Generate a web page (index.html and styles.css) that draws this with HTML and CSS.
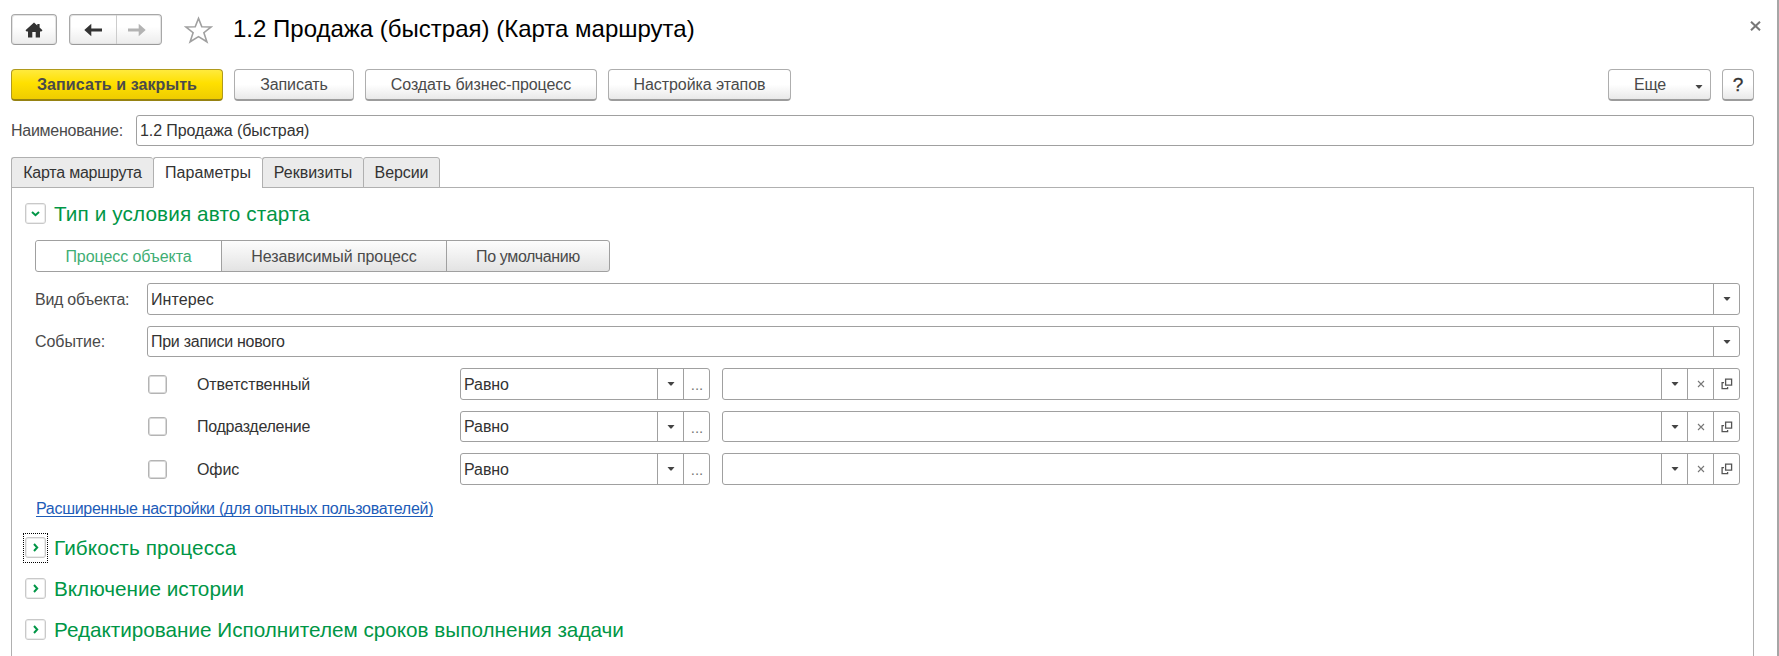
FILE: index.html
```html
<!DOCTYPE html>
<html lang="ru">
<head>
<meta charset="utf-8">
<title>1.2 Продажа (быстрая) (Карта маршрута)</title>
<link rel="stylesheet" href="styles.css">
</head>
<body>
<svg class="defs" aria-hidden="true">
  <symbol id="caret" viewBox="0 0 8 4"><path d="M0.5 0h7L4.6 3.6H3.4z" fill="#444"/></symbol>
  <symbol id="cross" viewBox="0 0 8 8"><path d="M1 1l6 6M7 1L1 7" stroke="#777" stroke-width="1.1"/></symbol>
  <symbol id="open" viewBox="0 0 12 12"><path d="M4.6 1.1h6v6h-6zM3 4.6H1.1v6h5.5V9" fill="none" stroke="#555" stroke-width="1.3"/></symbol>
</svg>
<main class="window">
  <header class="titlebar">
    <button class="nav home"><svg width="18" height="16" viewBox="0 0 18 16"><path d="M9 0.5L0.5 8.2 1.6 9.5H3V15.5H7.3V10H10.7V15.5H15V9.5H16.4L17.5 8.2 14.6 5.5V2H12.3V3.5z" fill="#333"/></svg></button>
    <div class="nav history">
      <button class="half back"><svg width="18" height="14" viewBox="0 0 18 14"><path d="M0.3 7L7.3 0.8V5.6H18V8.4H7.3V13.2z" fill="#333"/></svg></button>
      <button class="half fwd"><svg width="18" height="14" viewBox="0 0 18 14"><path d="M17.7 7L10.7 0.8V5.6H0V8.4H10.7V13.2z" fill="#b3b3b3"/></svg></button>
    </div>
    <svg class="star" width="29" height="28" viewBox="0 0 29 28"><path d="M14.5 2.4L17.8 10.7 27.1 11 19.9 16.7 22.9 25.8 14.5 20.6 6.1 25.8 9.1 16.7 1.9 11 11.2 10.7z" fill="#fff" stroke="#a0a0a0" stroke-width="1.6"/></svg>
    <h1>1.2 Продажа (быстрая) (Карта маршрута)</h1>
    <svg class="close" width="11" height="10" viewBox="0 0 11 10"><path d="M1 0.7l9 8.6M10 0.7L1 9.3" stroke="#777" stroke-width="2"/></svg>
  </header>

  <div class="commands">
    <button class="btn primary">Записать и закрыть</button>
    <button class="btn save">Записать</button>
    <button class="btn create">Создать бизнес-процесс</button>
    <button class="btn stages">Настройка этапов</button>
    <button class="btn more"><span>Еще</span><svg class="caret" width="8" height="4"><use href="#caret"/></svg></button>
    <button class="btn help">?</button>
  </div>

  <div class="name-row">
    <label class="tight">Наименование:</label>
    <div class="field"><span class="value">1.2 Продажа (быстрая)</span></div>
  </div>

  <nav class="tabs">
    <span class="tab map">Карта маршрута</span>
    <span class="tab params active">Параметры</span>
    <span class="tab attrs">Реквизиты</span>
    <span class="tab versions">Версии</span>
  </nav>

  <section class="panel">
    <div class="group wide">
      <span class="toggle"><svg width="9" height="6" viewBox="0 0 9 6"><path d="M1 1l3.5 3.2L8 1" fill="none" stroke="#009646" stroke-width="2"/></svg></span>
      <h2>Тип и условия авто старта</h2>
    </div>

    <div class="segments">
      <span class="segment on">Процесс объекта</span>
      <span class="segment mid">Независимый процесс</span>
      <span class="segment last tighter">По умолчанию</span>
    </div>

    <div class="form-row kind tall">
      <label class="tight">Вид объекта:</label>
      <div class="field"><span class="value loose">Интерес</span><span class="cell"><svg class="caret" width="8" height="4"><use href="#caret"/></svg></span></div>
    </div>
    <div class="form-row event">
      <label>Событие:</label>
      <div class="field"><span class="value tight">При записи нового</span><span class="cell"><svg class="caret" width="8" height="4"><use href="#caret"/></svg></span></div>
    </div>

    <div class="filter tall">
      <span class="check"></span><span class="caption">Ответственный</span>
      <div class="field compare"><span class="value">Равно</span><span class="cell"><svg class="caret" width="8" height="4"><use href="#caret"/></svg></span><span class="cell dots">...</span></div>
      <div class="field operand"><span class="value"></span><span class="cell"><svg class="caret" width="8" height="4"><use href="#caret"/></svg></span><span class="cell"><svg width="8" height="8"><use href="#cross"/></svg></span><span class="cell"><svg width="12" height="12"><use href="#open"/></svg></span></div>
    </div>
    <div class="filter">
      <span class="check"></span><span class="caption tight">Подразделение</span>
      <div class="field compare"><span class="value">Равно</span><span class="cell"><svg class="caret" width="8" height="4"><use href="#caret"/></svg></span><span class="cell dots">...</span></div>
      <div class="field operand"><span class="value"></span><span class="cell"><svg class="caret" width="8" height="4"><use href="#caret"/></svg></span><span class="cell"><svg width="8" height="8"><use href="#cross"/></svg></span><span class="cell"><svg width="12" height="12"><use href="#open"/></svg></span></div>
    </div>
    <div class="filter tall">
      <span class="check"></span><span class="caption">Офис</span>
      <div class="field compare"><span class="value">Равно</span><span class="cell"><svg class="caret" width="8" height="4"><use href="#caret"/></svg></span><span class="cell dots">...</span></div>
      <div class="field operand"><span class="value"></span><span class="cell"><svg class="caret" width="8" height="4"><use href="#caret"/></svg></span><span class="cell"><svg width="8" height="8"><use href="#cross"/></svg></span><span class="cell"><svg width="12" height="12"><use href="#open"/></svg></span></div>
    </div>

    <a class="advanced">Расширенные настройки (для опытных пользователей)</a>

    <div class="group folded wide focused">
      <span class="toggle"><svg width="6" height="9" viewBox="0 0 6 9"><path d="M1 1l3.2 3.5L1 8" fill="none" stroke="#009646" stroke-width="2"/></svg></span>
      <h2>Гибкость процесса</h2>
    </div>
    <div class="group folded">
      <span class="toggle"><svg width="6" height="9" viewBox="0 0 6 9"><path d="M1 1l3.2 3.5L1 8" fill="none" stroke="#009646" stroke-width="2"/></svg></span>
      <h2>Включение истории</h2>
    </div>
    <div class="group folded">
      <span class="toggle"><svg width="6" height="9" viewBox="0 0 6 9"><path d="M1 1l3.2 3.5L1 8" fill="none" stroke="#009646" stroke-width="2"/></svg></span>
      <h2>Редактирование Исполнителем сроков выполнения задачи</h2>
    </div>
  </section>
</main>
</body>
</html>
```
FILE: styles.css
```css
* { box-sizing: border-box; }

body {
  margin: 0;
  overflow: hidden;
  background: #fff;
  color: #333;
  font: 16px/20px "Liberation Sans", Arial, sans-serif;
  letter-spacing: -0.08px;
  white-space: nowrap;
}

button {
  margin: 0;
  padding: 0;
  font: inherit;
  letter-spacing: inherit;
  color: #4a4a4a;
}

svg { display: block; flex: none; }
.defs { position: absolute; width: 0; height: 0; }

.tight { letter-spacing: -0.27px; }
.tighter { letter-spacing: -0.37px; }
.loose { letter-spacing: 0.1px; }

.window {
  height: 656px;
  padding: 14px 23px 0 11px;
  border-right: 2px solid #a6a6a6;
  display: flex;
  flex-direction: column;
}

/* Title bar */
.titlebar {
  display: flex;
  align-items: center;
  height: 31px;
  flex: none;
}

.nav {
  height: 31px;
  border: 1px solid #a8a8a8;
  border-bottom-color: #999;
  border-radius: 4px;
  background: linear-gradient(#fff 40%, #ececec);
  box-shadow: inset 0 0 0 1px #e4e4e4;
  display: flex;
}

.home { width: 46px; align-items: center; justify-content: center; }
.history { width: 93px; margin-left: 12px; }

.half {
  border: 0;
  background: none;
  display: flex;
  align-items: center;
  justify-content: center;
}

.back { width: 47px; border-right: 1px solid #ccc; }
.fwd { flex: 1; padding-right: 4px; }
.star { margin: 0 0 0 22px; }

h1 {
  margin: -2px 0 0 20px;
  color: #000;
  font-size: 24px;
  font-weight: 400;
  line-height: 28px;
  letter-spacing: 0;
}

.close { margin: -8px -7px 0 auto; }

/* Command bar */
.commands {
  display: flex;
  gap: 11px;
  height: 32px;
  margin-top: 24px;
  flex: none;
}

.btn {
  height: 32px;
  border: 1px solid #aeaeae;
  border-bottom: 2px solid #9c9c9c;
  border-radius: 4px;
  background: linear-gradient(#fff 50%, #e9e9e9);
}

.primary {
  width: 212px;
  border-color: #b09a1c;
  border-bottom-color: #968212;
  background: linear-gradient(#ffea3d, #ffe000 45%, #efcc00);
  font-weight: 700;
  letter-spacing: 0.08px;
}

.save { width: 120px; }
.create { width: 232px; }
.stages { width: 183px; }

.more {
  width: 103px;
  margin-left: auto;
  padding: 0 7px 0 25px;
  display: flex;
  align-items: center;
  justify-content: space-between;
  letter-spacing: -0.2px;
}

.more .caret { margin-top: 5px; }

.help {
  width: 32px;
  color: #333;
  font-size: 19px;
  -webkit-text-stroke: 0.3px #333;
}

/* Fields */
.field {
  display: flex;
  height: 31px;
  border: 1px solid #a0a0a0;
  border-radius: 3px;
  background: #fff;
}

.value {
  flex: 1;
  padding-left: 3px;
  align-self: center;
}

.cell {
  width: 26px;
  border-left: 1px solid #a0a0a0;
  display: flex;
  align-items: center;
  justify-content: center;
  padding-left: 1px;
}

.dots {
  color: #777;
  font-size: 15px;
  padding: 2px 0 0 1px;
}

label { color: #4a4a4a; }

.name-row {
  display: grid;
  grid-template-columns: 125px 1fr;
  align-items: center;
  margin-top: 14px;
  flex: none;
}

/* Tabs */
.tabs {
  display: flex;
  height: 31px;
  margin: 11px 0 -1px;
  flex: none;
  position: relative;
}

.tab {
  height: 31px;
  border: 1px solid #b0b0b0;
  border-right: 0;
  border-radius: 3px 3px 0 0;
  background: #ebebeb;
  line-height: 29px;
  text-align: center;
}

.tab.active { background: #fff; border-bottom-color: #fff; }
.map { width: 142px; letter-spacing: -0.22px; }
.params { width: 109px; letter-spacing: 0.1px; }
.attrs { width: 101px; letter-spacing: 0; }
.versions { width: 77px; border-right: 1px solid #b0b0b0; }

/* Tab page */
.panel {
  flex: 1;
  min-height: 0;
  border: 1px solid #b0b0b0;
  border-bottom: 0;
  padding: 15px 13px 0;
}

.group {
  display: flex;
  align-items: center;
  gap: 8px;
  height: 21px;
}

.toggle {
  flex: none;
  width: 21px;
  height: 21px;
  border: 1px solid #c9c9c9;
  border-radius: 3px;
  box-shadow: inset 0 0 0 1px #ececec;
  display: flex;
  align-items: center;
  justify-content: center;
}

h2 {
  margin: 0;
  color: #009646;
  font-size: 20.7px;
  font-weight: 400;
  line-height: 24px;
  letter-spacing: 0;
}

.wide h2 { letter-spacing: 0.13px; }

.segments {
  display: flex;
  width: 575px;
  height: 32px;
  margin: 16px 0 0 10px;
  border: 1px solid #a0a0a0;
  border-radius: 3px;
  background: linear-gradient(#fdfdfd, #e3e3e3);
  line-height: 31px;
  text-align: center;
  color: #4a4a4a;
}

.on { width: 185px; background: #fff; color: #3fae74; border-radius: 3px 0 0 3px; }
.mid { width: 225px; border-left: 1px solid #a0a0a0; }
.last { flex: 1; border-left: 1px solid #a0a0a0; }

.form-row {
  display: grid;
  grid-template-columns: 112px 1fr;
  align-items: center;
  padding-left: 10px;
}

.kind,
.event { margin-top: 11px; }

.filter {
  display: grid;
  grid-template-columns: 49px 263px 250px 1fr;
  align-items: center;
  margin-top: 11px;
  padding-left: 123px;
}

.tall .field { height: 32px; }
.tall label,
.tall .caption,
.tall .value { padding-top: 2px; }
.operand { margin-left: 12px; }

.check {
  width: 19px;
  height: 19px;
  border: 1px solid #b4b4b4;
  border-radius: 3px;
  box-shadow: inset 0 0 0 1px #d9d9d9;
}

.advanced {
  display: block;
  width: max-content;
  height: 18px;
  margin: 14px 0 0 11px;
  border-bottom: 1px solid #1d5cb8;
  color: #1d5cb8;
  letter-spacing: -0.29px;
}

.folded { margin-top: 20px; }

.focused .toggle {
  position: relative;
}

.focused .toggle::after {
  content: "";
  position: absolute;
  inset: -5px -3px -6px;
  border: 1px dotted #000;
}
```
